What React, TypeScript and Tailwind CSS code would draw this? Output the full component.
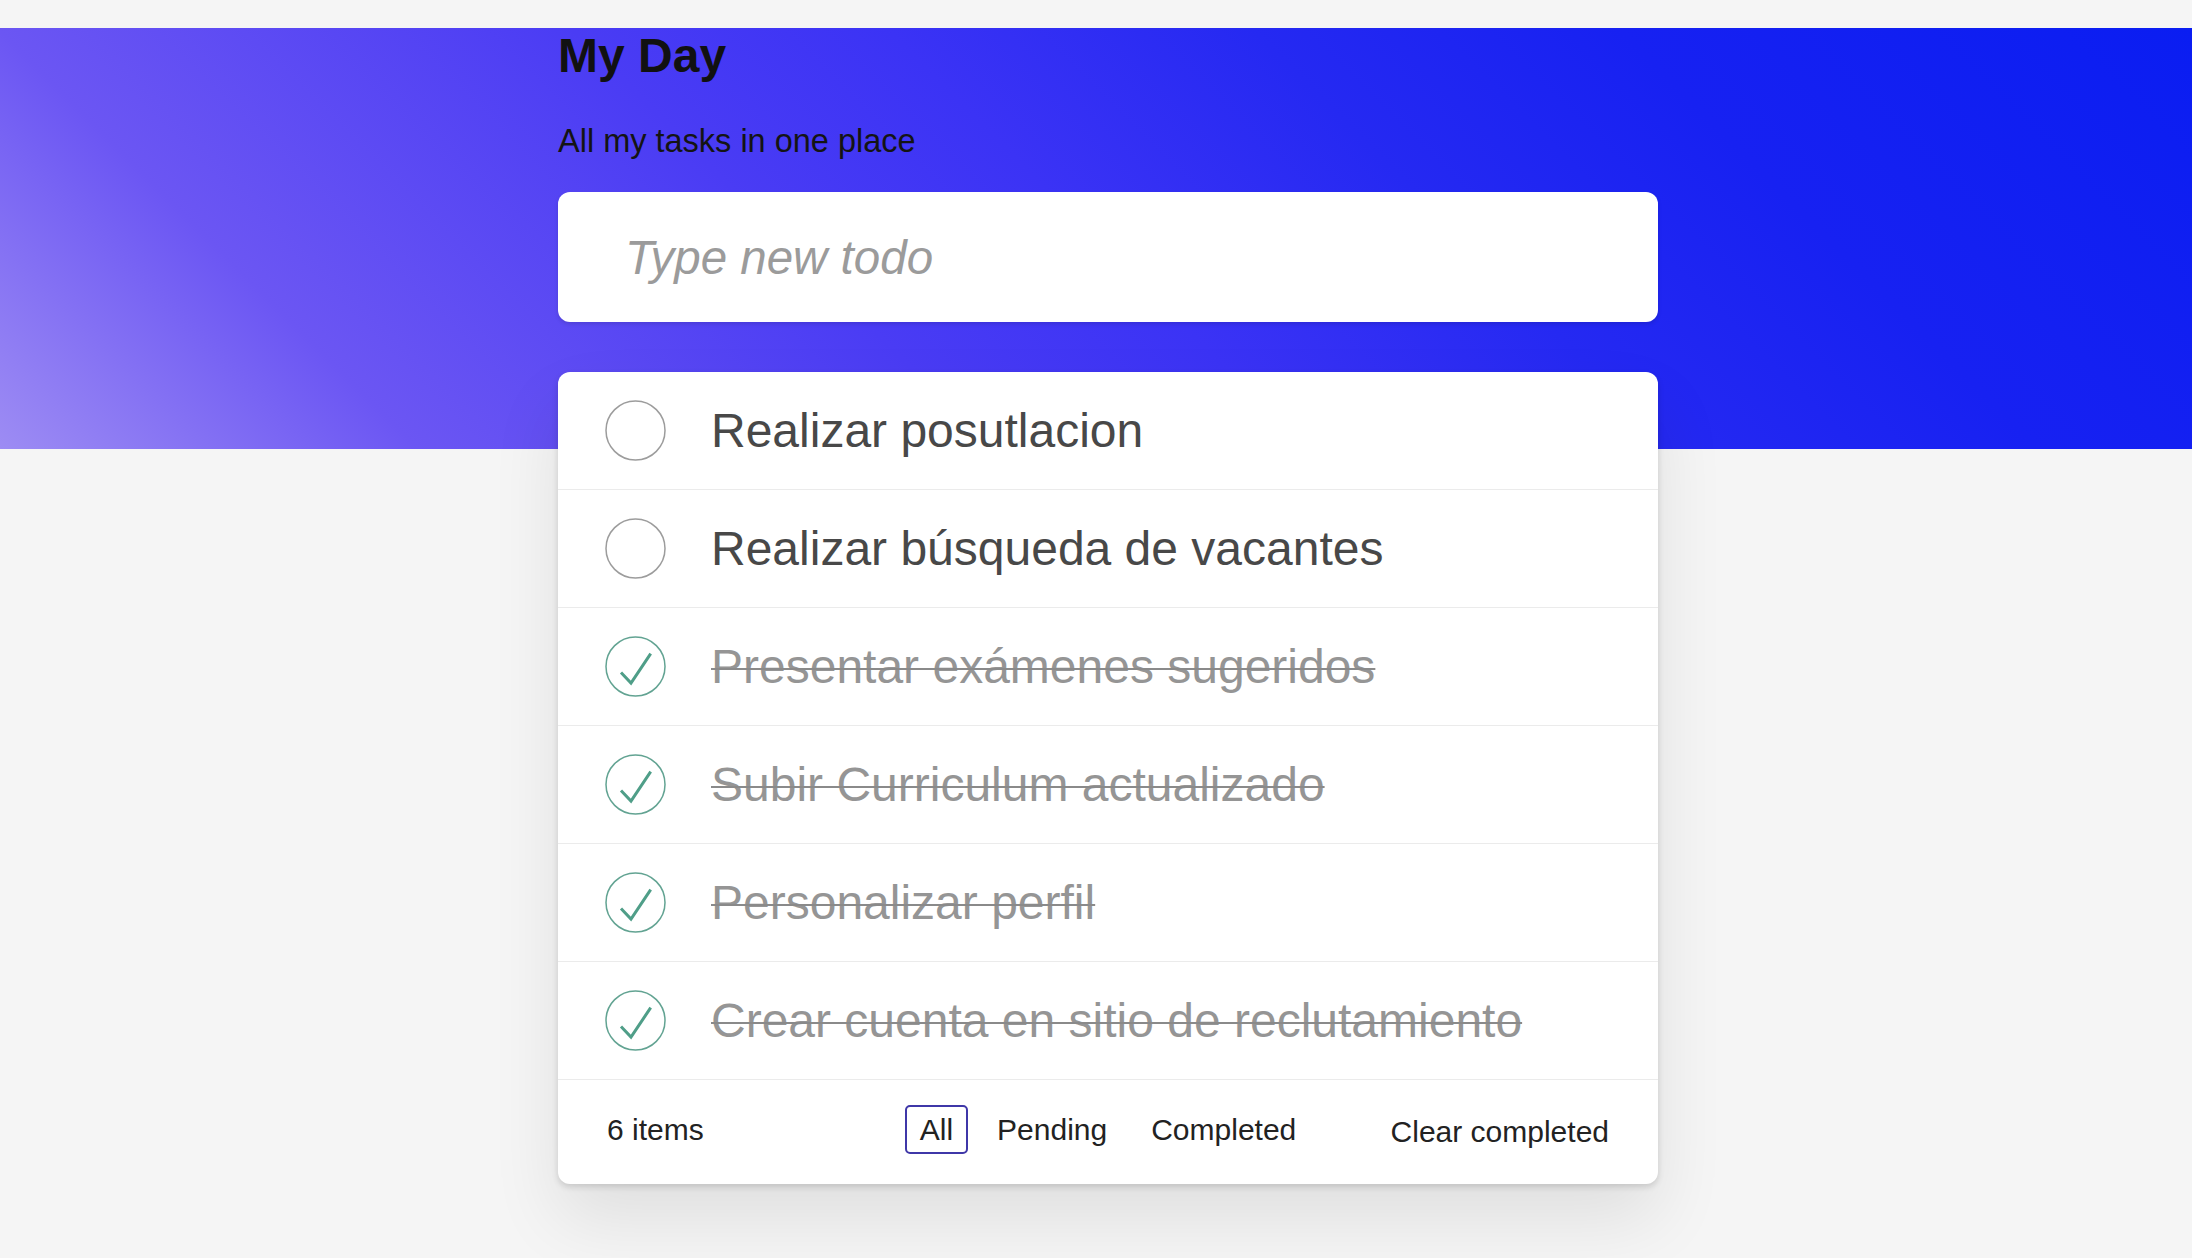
import React from 'react';

type Todo = { text: string; done: boolean };

const todos: Todo[] = [
  { text: 'Realizar posutlacion', done: false },
  { text: 'Realizar búsqueda de vacantes', done: false },
  { text: 'Presentar exámenes sugeridos', done: true },
  { text: 'Subir Curriculum actualizado', done: true },
  { text: 'Personalizar perfil', done: true },
  { text: 'Crear cuenta en sitio de reclutamiento', done: true },
];

function Check({ done }: { done: boolean }) {
  return (
    <svg width="61" height="61" viewBox="0 0 61 61" fill="none" className="shrink-0">
      <circle cx="30.5" cy="30.5" r="29.5" stroke={done ? '#62a392' : '#9c9c9c'} strokeWidth="1.5" />
      {done && (
        <path d="M16 36.5 L26 47 L45.7 17.7" stroke="#4f9e88" strokeWidth="3" strokeLinejoin="miter" />
      )}
    </svg>
  );
}

export default function App() {
  return (
    <div className="relative min-h-screen bg-[#f5f5f5] font-['Liberation_Sans',Arial,sans-serif] pt-[28px] pb-[60px]">
      {/* gradient banner behind the content */}
      <div className="absolute inset-x-0 top-[28px] h-[421px] bg-[linear-gradient(45deg,#9d8cf3_0%,#6b56f3_16%,#4a3cf4_38%,#3b33f5_50%,#2529f2_64%,#1721f2_78%,#0a1df2_100%)]" />

      <div className="relative flex justify-center pl-[24px]">
        <div className="w-[1100px]">
          <h1 className="text-[48px] leading-[56px] font-bold text-[#111]">My Day</h1>
          <p className="mt-[37px] text-[32.5px] leading-[40px] text-[#141414]">All my tasks in one place</p>

          <div className="mt-[31px] rounded-[12px] bg-white shadow-[0_2px_4px_rgba(0,0,0,0.12)]">
            <input
              className="h-[130px] w-full rounded-[12px] bg-transparent pl-[67px] text-[47.5px] italic text-[#444] outline-none placeholder:text-[#9b9b9b]"
              placeholder="Type new todo"
            />
          </div>

          <div className="mt-[50px] rounded-[12px] bg-white shadow-[0_3px_6px_rgba(0,0,0,0.14),0_35px_70px_rgba(0,0,0,0.09)]">
            {todos.map((t) => (
              <div key={t.text} className="flex h-[118px] items-center gap-[45px] border-b border-[#ebebeb] pl-[47px]">
                <Check done={t.done} />
                <span
                  className={
                    t.done
                      ? 'text-[48px] text-[#959595] line-through decoration-[#8a8a8a] decoration-[2px]'
                      : 'text-[48px] text-[#484848]'
                  }
                >
                  {t.text}
                </span>
              </div>
            ))}

            <div className="grid h-[104px] grid-cols-[1fr_auto_1fr] items-center px-[49px] pb-[5px] text-[30px] text-[#222]">
              <span>6 items</span>
              <div className="flex items-center gap-[14px]">
                <button className="h-[49px] rounded-[5px] border-2 border-[#3f37a8] px-[13px]">All</button>
                <button className="h-[49px] rounded-[5px] border-2 border-transparent px-[13px]">Pending</button>
                <button className="h-[49px] rounded-[5px] border-2 border-transparent px-[13px]">Completed</button>
              </div>
              <button className="justify-self-end pt-[4px]">Clear completed</button>
            </div>
          </div>
        </div>
      </div>
    </div>
  );
}
